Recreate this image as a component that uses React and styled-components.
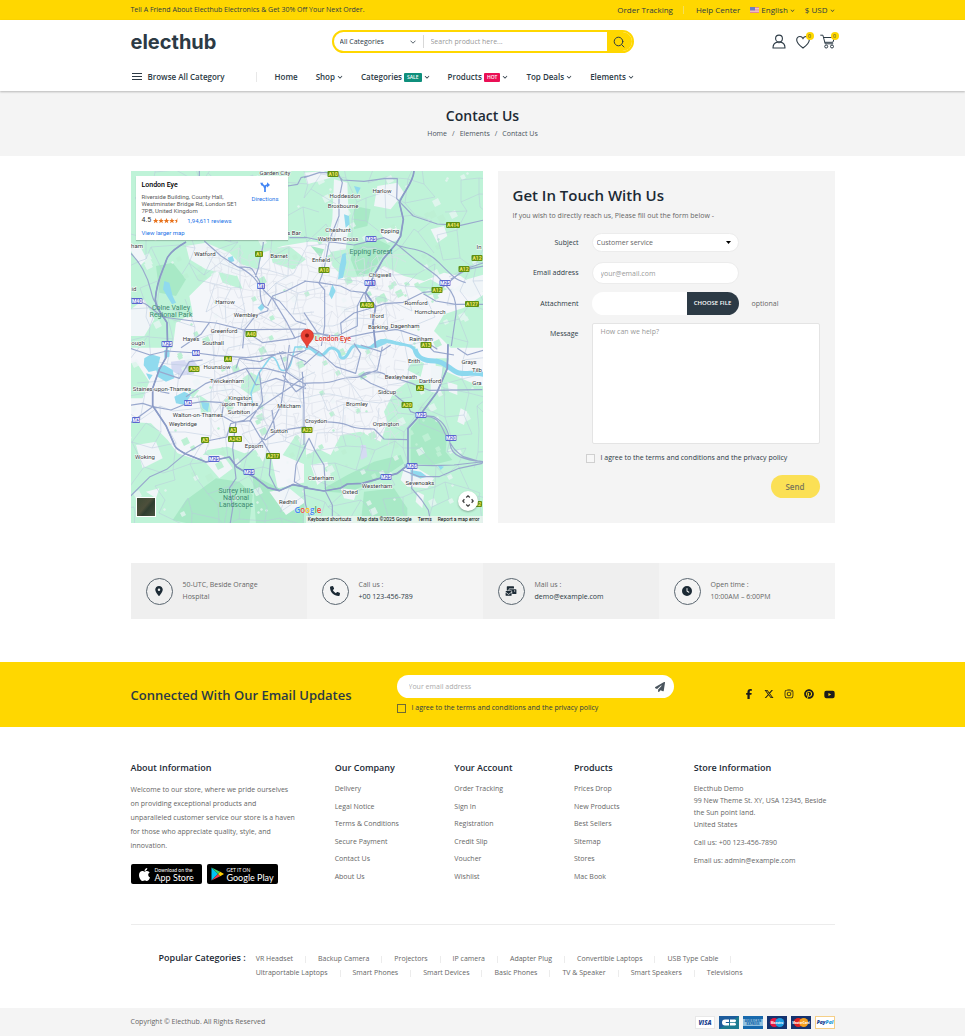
import React, { useState } from "react";
import styled, { createGlobalStyle } from "styled-components";
import {
  FaAngleDown,
  FaClock,
  FaEnvelopesBulk,
  FaFacebookF,
  FaInstagram,
  FaLocationDot,
  FaPaperPlane,
  FaPhone,
  FaPinterest,
  FaXTwitter,
  FaYoutube,
  FaApple,
} from "react-icons/fa6";

const GlobalStyle = createGlobalStyle`
  * {
    box-sizing: border-box;
  }
  body {
    margin: 0;
    background: #fff;
    color: #666;
    font-family: "Open Sans", "Noto Sans", sans-serif;
    font-size: 7px;
    line-height: 12px;
  }
  h1, h2, h3, p, ul {
    margin: 0;
    padding: 0;
  }
  ul {
    list-style: none;
  }
  a {
    color: inherit;
    text-decoration: none;
  }
  button, input, select, textarea {
    font: inherit;
    color: inherit;
  }
  svg {
    display: block;
    flex: none;
  }
`;

const Container = styled.div`
  width: 100%;
  max-width: 704px;
  margin: 0 auto;
`;

/* ---------- top bar ---------- */

const TopBar = styled.div`
  background: #ffd700;
  color: #2c3a45;
`;

const TopInner = styled(Container)`
  display: flex;
  align-items: center;
  justify-content: space-between;
  min-height: 20px;
`;

const TopLinks = styled.div`
  display: flex;
  align-items: center;
  font-size: 8px;

  > * + * {
    margin-left: 10px;
    padding-left: 12px;
    border-left: 1px solid #f5e05a;
  }
`;

const TopLink = styled.a`
  display: block;
  line-height: 8px;
`;

const TopMenu = styled.button`
  display: flex;
  align-items: center;
  gap: 2px;
  padding: 0;
  border: 0;
  background: none;
  line-height: 8px;
  cursor: pointer;
`;

/* ---------- header ---------- */

const Header = styled.header`
  position: relative;
  background: #fff;
  box-shadow: 0 1px 2px rgba(0, 0, 0, 0.25);
  color: #2c3a45;
`;

const HeaderMain = styled(Container)`
  display: grid;
  grid-template-columns: 1fr 302px 1fr;
  align-items: center;
  padding-top: 10px;
`;

const Logo = styled.a`
  font-family: Inter, sans-serif;
  font-size: 20px;
  font-weight: 700;
  line-height: 22px;
  color: #2c3a45;
`;

const Search = styled.form`
  display: flex;
  height: 23px;
  border: 2px solid #ffd700;
  border-radius: 12px;
  overflow: hidden;
`;

const CategoryPick = styled.div`
  display: flex;
  align-items: center;
  width: 89px;
  padding: 0 7px 0 6px;

  select {
    flex: 1;
    min-width: 0;
    padding: 0;
    border: 0;
    background: none;
    appearance: none;
    outline: none;
  }
`;

const SearchInput = styled.input`
  flex: 1;
  min-width: 0;
  margin: 3px 0;
  padding: 0 7px;
  border: 0;
  border-left: 1px solid #d8d8d8;
  outline: none;

  &::placeholder {
    color: #999;
  }
`;

const SearchButton = styled.button`
  display: flex;
  align-items: center;
  justify-content: center;
  width: 25px;
  padding: 0;
  border: 0;
  background: #ffd700;
  cursor: pointer;
`;

const HeaderIcons = styled.div`
  display: flex;
  justify-content: flex-end;
  gap: 10px;
`;

const IconLink = styled.a`
  position: relative;
  display: block;
`;

const Count = styled.span`
  position: absolute;
  top: -2px;
  right: -4px;
  width: 8px;
  height: 8px;
  border-radius: 50%;
  background: #ffd700;
  font-size: 5px;
  line-height: 8px;
  text-align: center;
`;

const Nav = styled(Container)`
  display: flex;
  align-items: center;
  min-height: 28px;
  margin-top: 10px;
  font-size: 8px;
  font-weight: 600;
`;

const Browse = styled.button`
  display: flex;
  align-items: center;
  gap: 6px;
  width: 126px;
  padding: 0 0 0 1px;
  border: 0;
  border-right: 1px solid #e8e8e8;
  background: none;
  line-height: 10px;
  cursor: pointer;
`;

const NavList = styled.ul`
  display: flex;
  gap: 18px;
  padding-left: 18px;
`;

const NavLink = styled.a`
  display: flex;
  align-items: center;
  gap: 2px;
`;

const Tag = styled.span`
  padding: 0 3px;
  border-radius: 1px;
  background: ${({ $color }) => $color};
  color: #fff;
  font-size: 5px;
  line-height: 9px;
`;

/* ---------- page title ---------- */

const PageTitle = styled.div`
  padding: 15px 0 14px;
  background: #f4f4f4;
  text-align: center;

  h1 {
    color: #1c2a35;
    font-size: 14px;
    font-weight: 600;
    line-height: 20px;
  }
`;

const Crumbs = styled.nav`
  display: flex;
  justify-content: center;
  gap: 5px;
  color: #4a555e;
  line-height: 16px;
`;

/* ---------- contact ---------- */

const Contact = styled(Container)`
  display: grid;
  grid-template-columns: 352fr 337fr;
  gap: 15px;
  margin-top: 15px;
`;

const MapBox = styled.section`
  position: relative;
  overflow: hidden;
  color: #333;
  font-family: Roboto, sans-serif;

  > svg {
    width: 100%;
    height: auto;
  }
`;

const PlaceCard = styled.div`
  position: absolute;
  top: 5px;
  left: 5px;
  display: flex;
  justify-content: space-between;
  width: 152px;
  padding: 5px 9px 4px 6px;
  background: #fff;
  box-shadow: 0 1px 1px rgba(0, 0, 0, 0.2);
  font-size: 6px;
  line-height: 7px;

  h3 {
    color: #000;
    font-size: 7px;
    font-weight: 500;
    line-height: 9px;
  }
  p {
    margin: 3px 0 2px;
    color: #5b5b5b;
  }
  a {
    color: #1a73e8;
  }
`;

const Rating = styled.div`
  display: flex;
  align-items: center;
  gap: 2px;
  margin-bottom: 4px;
  font-size: 7px;
  line-height: 9px;

  a {
    margin-left: 5px;
    font-size: 6px;
  }
`;

const Directions = styled.a`
  display: flex;
  flex-direction: column;
  align-items: center;
  gap: 3px;
  padding-top: 1px;
`;

const Satellite = styled.button`
  position: absolute;
  bottom: 6px;
  left: 5px;
  width: 20px;
  height: 20px;
  padding: 0;
  border: 1px solid #fff;
  background: linear-gradient(130deg, #3c4a35, #4d4f3b 45%, #2f3d30 60%, #4a5340);
`;

const MapControl = styled.button`
  position: absolute;
  right: 5px;
  bottom: 12px;
  display: flex;
  align-items: center;
  justify-content: center;
  width: 20px;
  height: 20px;
  padding: 0;
  border: 0;
  border-radius: 50%;
  background: #fff;
  box-shadow: 0 1px 2px rgba(0, 0, 0, 0.3);
`;

const GoogleMark = styled.div`
  position: absolute;
  bottom: 7px;
  left: 164px;
  font-family: "Open Sans", sans-serif;
  font-size: 8px;
  font-weight: 600;
  line-height: 12px;
  text-shadow: 0 0 1px #fff;
`;

const MapFooter = styled.div`
  position: absolute;
  right: 0;
  bottom: 0;
  display: flex;
  gap: 6px;
  padding: 0 3px 0 2px;
  background: rgba(245, 245, 245, 0.7);
  color: #000;
  font-size: 5px;
  line-height: 7px;
`;

const FormPanel = styled.form`
  padding: 15px 15px 24px;
  background: #f4f4f4;

  h2 {
    color: #1c2a35;
    font-size: 15px;
    font-weight: 600;
    line-height: 19px;
  }
  > p {
    margin: 5px 0 11px;
  }
`;

const Field = styled.div`
  display: grid;
  grid-template-columns: 66px 1fr;
  column-gap: 13px;
  align-items: ${({ $top }) => ($top ? "start" : "center")};
  margin-bottom: ${({ $gap }) => $gap || 8}px;

  > label {
    padding-top: ${({ $top }) => ($top ? 5 : 0)}px;
    color: #2c3a45;
    text-align: right;
  }
`;

const SelectWrap = styled.div`
  display: flex;
  align-items: center;
  width: 147px;
  height: 19px;
  padding: 0 7px 0 4px;
  border: 1px solid #ececec;
  border-radius: 10px;
  background: #fff;

  select {
    flex: 1;
    padding: 0;
    border: 0;
    background: none;
    appearance: none;
    outline: none;
  }
`;

const TextInput = styled.input`
  width: 147px;
  height: 22px;
  padding: 0 8px;
  border: 1px solid #ececec;
  border-radius: 11px;
  background: #fff;
  outline: none;

  &::placeholder {
    color: #999;
  }
`;

const Attach = styled.div`
  display: flex;
  align-items: center;
  gap: 13px;
`;

const FilePick = styled.div`
  display: flex;
  width: 147px;
  height: 23px;
  border-radius: 12px;
  background: #fff;
  overflow: hidden;

  input {
    width: 0;
    flex: 1;
    opacity: 0;
  }
  label {
    width: 52px;
    background: #2c3a45;
    color: #fff;
    font-size: 6px;
    font-weight: 600;
    line-height: 23px;
    text-align: center;
    cursor: pointer;
  }
`;

const Message = styled.textarea`
  display: block;
  width: 100%;
  height: 121px;
  padding: 2px 8px;
  border: 1px solid #e4e4e4;
  border-radius: 2px;
  background: #fff;
  outline: none;
  resize: none;

  &::placeholder {
    color: #999;
  }
`;

const Check = styled.label`
  display: flex;
  align-items: center;
  gap: 6px;
  color: #2c3a45;

  input {
    width: 9px;
    height: 9px;
    margin: 0;
    border: 1px solid ${({ $line }) => $line};
    background: ${({ $fill }) => $fill};
    appearance: none;
  }
  input:checked {
    background: #2c3a45;
  }
`;

const Agree = styled.div`
  padding-left: 73px;
`;

const Send = styled.button`
  display: block;
  width: 49px;
  height: 23px;
  margin: 11px 0 0 auto;
  padding: 0;
  border: 0;
  border-radius: 12px;
  background: #fbe055;
  color: #79755a;
  font-size: 8px;
  font-weight: 600;
  cursor: pointer;
`;

/* ---------- info strip ---------- */

const InfoStrip = styled(Container)`
  display: grid;
  grid-template-columns: repeat(4, 1fr);
  margin-top: 40px;
`;

const InfoCell = styled.div`
  display: flex;
  align-items: center;
  gap: 10px;
  min-height: 56px;
  padding: 0 15px;
  background: #f4f4f4;

  &:nth-child(odd) {
    background: #efefef;
  }
  p {
    max-width: 90px;
  }
  a {
    color: #2c3a45;
  }
`;

const Round = styled.span`
  display: flex;
  flex: none;
  align-items: center;
  justify-content: center;
  width: 27px;
  height: 27px;
  border: 1px solid #5a6670;
  border-radius: 50%;
  color: #1c2a35;
`;

/* ---------- newsletter ---------- */

const Newsletter = styled.section`
  margin-top: 43px;
  background: #ffd700;
`;

const NewsInner = styled(Container)`
  display: grid;
  grid-template-columns: 266px 277px 1fr;
  align-items: center;
  min-height: 65px;

  h2 {
    color: #2c3a45;
    font-size: 13px;
    font-weight: 600;
    line-height: 18px;
  }
`;

const Subscribe = styled.div`
  display: flex;
  align-items: center;
  height: 23px;
  margin-bottom: 4px;
  padding: 0 9px 0 12px;
  border-radius: 12px;
  background: #fff;

  input {
    flex: 1;
    min-width: 0;
    padding: 0;
    border: 0;
    background: none;
    outline: none;
  }
  input::placeholder {
    color: #aaa;
  }
  button {
    padding: 0;
    border: 0;
    background: none;
    color: #4a555e;
    cursor: pointer;
  }
`;

const Socials = styled.div`
  display: flex;
  justify-content: flex-end;
  gap: 10px;
  color: #1c1c1c;
`;

/* ---------- footer ---------- */

const FooterGrid = styled(Container)`
  display: grid;
  grid-template-columns: 29fr 17fr 17fr 17fr 20fr;
  padding: 34px 0 40px;

  h3 {
    margin-bottom: 9px;
    color: #1c2a35;
    font-size: 9px;
    font-weight: 600;
    line-height: 13px;
    white-space: nowrap;
  }
`;

const About = styled.p`
  line-height: 14px;
`;

const Badges = styled.div`
  display: flex;
  gap: 5px;
  margin-top: 11px;
`;

const Badge = styled.a`
  display: flex;
  align-items: center;
  gap: 3px;
  width: 71px;
  height: 20px;
  padding-left: ${({ $pad }) => $pad}px;
  border-radius: 2px;
  background: #000;
  color: #fff;
  font-family: Lato, sans-serif;
  font-size: 9px;
  line-height: 9px;

  small {
    display: block;
    font-size: 5px;
    line-height: 6px;
    white-space: nowrap;
  }
  span {
    white-space: nowrap;
  }
`;

const LinkList = styled.ul`
  display: flex;
  flex-direction: column;
  justify-content: space-between;
  min-height: 100px;
  margin-bottom: 1px;
`;

const Address = styled.div`
  p + p {
    margin-top: 6px;
  }
`;

const Popular = styled(Container)`
  display: flex;
  gap: 10px;
  padding: 26px 28px 28px;
  border-top: 1px solid #ececec;

  h3 {
    color: #1c2a35;
    font-size: 9px;
    font-weight: 600;
    line-height: 14px;
    white-space: nowrap;
  }
  ul {
    display: flex;
    flex-wrap: wrap;
    max-width: 510px;
    padding-top: 1px;
  }
  li {
    display: flex;
    align-items: center;
    line-height: 14px;
  }
  li:not(:last-child)::after {
    content: "";
    height: 7px;
    margin: 0 12px;
    border-left: 1px solid #ececec;
  }
`;

const Copyright = styled.footer`
  background: #f4f4f4;
`;

const CopyInner = styled(Container)`
  display: flex;
  align-items: center;
  justify-content: space-between;
  min-height: 28px;
`;

const Payments = styled.div`
  display: flex;
  gap: 4px;
`;

/* ---------- icons ---------- */

const UsFlag = () => (
  <svg width="9" height="6" viewBox="0 0 9 6">
    <rect width="9" height="6" fill="#f3dfe3" />
    <path d="M0 .5h9M0 2.2h9M0 3.9h9M0 5.5h9" stroke="#e0707c" strokeWidth=".8" />
    <rect width="5" height="3.4" fill="#6a7cc4" />
  </svg>
);

const SearchIcon = () => (
  <svg width="12" height="12" viewBox="0 0 12 12" fill="none" stroke="#2c3a45" strokeLinecap="round">
    <circle cx="5.5" cy="5.5" r="4.3" />
    <path d="M8.7 8.7 11 11" />
  </svg>
);

const UserIcon = () => (
  <svg width="14" height="15" viewBox="0 0 14 15" fill="none" stroke="#2c3a45" strokeWidth="1.1" strokeLinejoin="round">
    <circle cx="7" cy="4.500" r="3.400" />
    <path d="M1 14c0-3 1.600-5.200 4-5.900.6.4 1.300.6 2 .6s1.400-.2 2-.6c2.400.7 4 2.900 4 5.900z" />
  </svg>
);

const HeartIcon = () => (
  <svg width="14" height="15" viewBox="0 0 14 15" fill="none" stroke="#2c3a45" strokeWidth="1.1">
    <path d="M7 14C3.400 11.300.7 8.900.7 6 .7 3.900 2.200 2.500 4 2.500c1.300 0 2.400.7 3 1.900.6-1.200 1.700-1.900 3-1.900 1.800 0 3.300 1.400 3.300 3.500 0 2.900-2.700 5.300-6.300 8z" />
  </svg>
);

const CartIcon = () => (
  <svg width="15" height="15" viewBox="0 0 15 15" fill="none" stroke="#2c3a45">
    <path d="M.3 1.200h2.600l2.300 8.600h8M3.700 3.500h10.800l-1.600 4.800H4.800" />
    <circle cx="6.200" cy="12.500" r="1.500" />
    <circle cx="12" cy="12.500" r="1.500" />
  </svg>
);

const MenuIcon = () => (
  <svg width="10" height="8" viewBox="0 0 10 8" stroke="#2c3a45">
    <path d="M0 .5h10M0 3.500h10M0 6.500h10" />
  </svg>
);

const ChevronIcon = () => (
  <svg width="6" height="4" viewBox="0 0 6 4" fill="none" stroke="#2c3a45" strokeWidth=".8">
    <path d="M.5.7 3 3.200 5.500.7" />
  </svg>
);

const CaretIcon = () => (
  <svg width="5" height="3" viewBox="0 0 5 3">
    <path d="M0 0h5L2.500 3z" fill="#000" />
  </svg>
);

const StarsIcon = () => (
  <svg width="27" height="6" viewBox="0 0 27 6" fill="#e7711b">
    {[0, 1, 2, 3].map((i) => (
      <path key={i} transform={`translate(${i * 5.4} 0)`} d="M2.700 0l.8 1.900h1.900L3.900 3.200l.6 2.100-1.800-1.300L.9 5.300l.6-2.100L0 1.900h1.900z" />
    ))}
    <path d="M24.300 0v4l-1.800 1.300.6-2.100L21.600 1.900h1.900z" />
  </svg>
);

const DirectionsIcon = () => (
  <svg width="10" height="10" viewBox="0 0 10 10" fill="none" stroke="#4285f4" strokeWidth="1.700">
    <path d="M5 10V6.300C5 4 6 3 8 3M5 6.500C4.800 4.500 3.500 3.200 1.700 2.300" />
    <path d="M7 .2 10 3 7 5.600z" fill="#4285f4" stroke="none" />
    <path d="M.2.700h3L1.500 3.700z" fill="#4285f4" stroke="none" />
  </svg>
);

const PanIcon = () => (
  <svg width="12" height="12" viewBox="0 0 12 12" fill="none" stroke="#444" strokeWidth="1.300">
    <path d="M4.200 2.400 6 .8l1.800 1.600M4.200 9.600 6 11.200l1.800-1.600M2.400 4.200.8 6l1.600 1.800M9.600 4.200 11.200 6 9.600 7.800" />
  </svg>
);

const PlayIcon = () => (
  <svg width="13" height="14" viewBox="0 0 13 14">
    <path d="M.5.500v13L7 7z" fill="#00c3f5" />
    <path d="M.5.500 7 7l2.200-2.300z" fill="#3bd06b" />
    <path d="M.5 13.500 7 7l2.200 2.300z" fill="#f0384b" />
    <path d="M9.200 4.700 13 7 9.200 9.300 7 7z" fill="#ffcf00" />
  </svg>
);

const Visa = () => (
  <svg width="20" height="13" viewBox="0 0 20 13">
    <rect x=".5" y=".5" width="19" height="12" fill="#fff" stroke="#e8e8e8" />
    <text x="10" y="9" textAnchor="middle" fontFamily="Open Sans" fontSize="6" fontWeight="800" fontStyle="italic" fill="#1a3f8f">
      VISA
    </text>
  </svg>
);

const CarteBleue = () => (
  <svg width="20" height="13" viewBox="0 0 20 13">
    <rect width="20" height="13" fill="#1c5c9c" />
    <path d="M0 13 20 0v13z" fill="#1b7a90" />
    <path d="M10 3.500H6a3 3 0 0 0 0 6h4V7H6.800v-.9H10zM11 3.500h5a1.400 1.400 0 0 1 0 2.700h-5zM11 6.900h5a1.400 1.400 0 0 1 0 2.700h-5z" fill="#fff" />
  </svg>
);

const Amex = () => (
  <svg width="20" height="13" viewBox="0 0 20 13">
    <rect width="20" height="13" fill="#1769ad" />
    <rect y="3" width="20" height="7" fill="#8fc0e0" />
    <text x="10" y="6" textAnchor="middle" fontFamily="Open Sans" fontSize="3" fontWeight="800" fill="#1769ad">
      AMERICAN
    </text>
    <text x="10" y="9" textAnchor="middle" fontFamily="Open Sans" fontSize="3" fontWeight="800" fill="#1769ad">
      EXPRESS
    </text>
  </svg>
);

const Circles = ({ left, right, name }) => (
  <svg width="20" height="13" viewBox="0 0 20 13">
    <rect width="20" height="13" fill="#14326e" />
    <circle cx="7.300" cy="6.500" r="4.500" fill={left} />
    <circle cx="12.700" cy="6.500" r="4.500" fill={right} />
    <text x="10" y="7.500" textAnchor="middle" fontFamily="Open Sans" fontSize="3" fontWeight="700" fill="#fff">
      {name}
    </text>
  </svg>
);

const PayPal = () => (
  <svg width="20" height="13" viewBox="0 0 20 13">
    <rect x=".5" y=".5" width="19" height="12" fill="#fff" stroke="#f5cf87" />
    <text x="10" y="8" textAnchor="middle" fontFamily="Open Sans" fontSize="5" fontWeight="800" fontStyle="italic" fill="#1a3f8f">
      Pay<tspan fill="#2a9ad8">Pal</tspan>
    </text>
  </svg>
);

/* ---------- map drawing ---------- */

// the map is drawn as four quarters, each on a grid three times finer than the page
const QUARTERS = [
  {
    at: "translate(-5 -5)",
    green: [
      "M0 0H560V225L470 240 410 260 395 310 330 290 280 310 230 350 190 390 200 440 150 470 140 545H0z",
      "M270 300l60 20 20 50-60-20zM430 250l60-10 50 40-40 30-60-20z",
    ],
    bare: ["M15 430l40-30 30 60-30 50H15zM180 240l60-10 70 30 50 50-30 20-90-20-50-30zM12 250l30-10 20 40-20 20z"],
    forest: ["M90 300l50-10 40 50-30 50-50-10z"],
    water: ["M115 345l15 5 10 40 10 20-12 5-15-25-12-20zM395 425l15-15 5 15-10 10zM305 275l15-5 5 15-15 5z"],
    roads: [
      "M180 228C150 245 125 265 120 285S92 340 88 400c0 25 18 42 35 70l2 75",
      "M12 260C40 285 65 330 75 375S90 400 92 420l20 34",
      "M12 395l48 20 50 38 90 12 70 6 80 20 190-2",
      "M235 225l50 45 50 32c20 8 35 20 48 32l30 38 28 28 42 70 25 48",
      "M340 303c18 2 35-4 42 12l18 30c5 20-2 55 12 72 6 10 20 6 12 18l-34 12-35 45-5 55",
      "M412 228c0 20-12 50-14 75l-10 30",
      "M540 345l-60 30-40 15-15 30",
      "M350 490l60 40 90-12 40-14",
      "M250 470l-25 35-60 40",
      "M490 215h50M485 60l30-5 10-20 20-5M220 15v15",
      "M440 395l20 10 50 60 30 10",
    ],
  },
  {
    at: "translate(173 -5)",
    green: [
      "M0 0H540V380L470 330 420 320 360 345 300 330 240 300 200 330 120 335 85 300 75 230 0 225z",
      "M440 545l-50-50 30-50 60-20 60-40v160zM330 360l50-20 50 30-60 20z",
    ],
    bare: [
      "M90 40l40 10 5 130-10 70-60 10 20-100zM220 60l60-10 20 30-40 50-50-10zM225 195l50-15 15 40-40 10zM450 370l40-30 50-15v50l-40 20z",
      "M0 20l60-5 20 20-70 20zM380 190l40-10 10 30-30 20z",
    ],
    forest: ["M150 235l70-15 40 20-60 80-40 10-20-50zM150 120l50 10-10 50-40 10zM20 240l40 10-10 25z"],
    water: [
      "M115 265l10-5 2 30-10 45-15 5 5-40zM85 355l10 20-12 25-8-15zM120 145l15 5 2 25-12 10zM150 60l20 5-10 20z",
      "M200 545l30-25 40 5 40 14h-20l-40-8-30 14z",
    ],
    roads: [
      "M330 15c-2 35-30 60-44 95l12 50-8 50-15 25-38 45-28 50-24 50 30 42-8 48 8 75",
      "M100 15l15 35-10 50v50l-28 70-17 90-15 42 17 20v108l-10 60",
      "M0 35l45-15 50 0 20 22 65 4 60-8 40 0-2 60 50 52 72 24 70 4 70-16",
      "M540 290l-60 20-52 45-28 20-42 4-60 30-56 4-50 16-42 12-40 30 5 60",
      "M540 415h-85l-60-10-37-22",
      "M0 345l45 5 65 10 30 15 42 5 8 38",
      "M0 213l60 12 90 12 90-22 35 17 65 54 60 45 30 32c20 20 28 45 26 80l-14 97",
      "M275 235c40 20 80 5 130 55s50 50 80 60M440 340l50-30 50-10",
      "M200 500l80-10 60 20 60 40M180 380l-20 40 0 60-60 30-90-10",
      "M0 440l40 60 60 20 100-20",
    ],
  },
  {
    at: "translate(-5 174)",
    green: [
      "M0 230l75 5 50 50 30 40 60 20 30-30 60-10 50 20 50-15 30 20 20 100 90-20V545H0z",
      "M0 60l30-10 40 60-20 50H0zM350 100l25-18 32 18-5 35-30 15-28-20zM220 150l30 20 5 30-30 5zM180 130l40 5-20 25zM470 330l40-60 30 20v70z",
    ],
    bare: ["M30 300l60-10 20 50-60 30zM220 330l70 0 30 40-40 30zM430 440l60-10 50 40-60 40zM60 440l40-10-10 30zM380 300l50 10-20 40z"],
    forest: ["M270 400l70 10 40 40-10 90-140 5-90-20 40-60zM380 390l160 80v70H390z"],
    water: [
      "M55 40l20-12 28 8-10 40-25 5-15-20zM90 70l25-10 25 15 5 25-25 10-25-15zM115 15l15 0v20l-15 5zM145 155l30-15 20 10-20 30-25-5zM225 170l25 5-5 25-15-10zM60 85l20 5-10 15z",
    ],
    airport: "M135 50l65-8 15 20-12 25-40 5-26-15z",
    roads: [
      "M123-2l-3 40-20 35-20 57v52l40 60 22 50c5 20 20 25 38 35l60 24 70-15 22 30 58 34 35 28 35 9 40-18 45 8",
      "M12 235l68-50 55 10 38-16 60-10 60 4",
      "M12 455l60-60 50-22 60-50 60-35 60-12 12-40 40-10 50-40 90-60 40-30",
      "M12 10l60 20 50-12 90 6 60 8 90 6 170-20",
      "M100 80l60 20 30-50 40-5",
      "M180 155l60-40 80-30 40-15 60 0 60 15 20-50 40-20",
      "M293 172l-5 40 35 20 50-5 30 50 15 8 30-20-10-70",
      "M330 230l-10 80 10 90-20 30 10 60-8 50",
      "M325 365l40-35 50-50 50-100 15-100-20-60",
      "M405 280l30 50-5 60 20 40 10 8M440 260l100-15",
      "M360 70l30 50 60-20 90 30M400 80l10 90-20 30-20 30",
      "M330 70l10-30 60 10 70-30 70 30M470 90l40 50 30-20",
      "M490 0l-10 80 60 40M540 300l-30 60-5 50 35 20",
      "M80 185l-30-10-38 6M80 135l50 10",
    ],
  },
  {
    at: "translate(173 174)",
    green: [
      "M230 290l20-60-10-30 30-60 55-40 50 10 30-40 90 40 60 20v420H0V340l40-30 40 20 30-60 60-10z",
      "M330 40l30 15-10 40-40-20zM395 40l40 0-10 40-30 10z",
    ],
    bare: ["M300 370l40 0 50 30-20 30-60-5-20-20zM20 360l50-10 10 40-40 30zM110 430l50 5-10 30-30-5zM380 60l35 5-5 80-30-5zM470 190l20 10-10 40-20-10zM340 440l20 10-5 40-20-20zM430 110l30 10 0 30-25-10z"],
    forest: ["M320 250l30-35 45 5 35 40-5 60 20 25-60 15-65-5zM60 430l70-40 80-40 80-20 10 25-60 40-110 50-60-5zM180 440l90-10 40 60 0 50H170z"],
    water: ["M320 375l30 5 20 15-20 5-30-10zM400 360l20 5-10 10z"],
    airport: "M170 300l15 0 5 35-20 10z",
    roads: [
      "M0 428l60 10 50-9 20-12 45-2 105-30 32-25V250l38-42 50-68 30-70 2-72",
      "M0 115c40-5 60 5 100-10s60 0 75-15 60-10 70 0 60 15 90 30l40 16 160-2",
      "M170 95l30 20 60 25 50 40 10 20 30 10 40 5c30 15 45 40 48 80s45 50 100 55",
      "M350 215c60-5 60 30 78 60s20 40 50 60l60 18",
      "M300 360l90 2 60-2 90-10M295 375l50 20 60 0 60-25 70-15",
      "M0 225c30 10 100 0 130 15s50 10 80 12l30 30 70 2",
      "M0 310l15-30 20 40 25 40 5 80 20 40 0 50",
      "M325 370l-2 60 30 35 20 30 10 50",
      "M0 60l45-40 50 45 60 20 15-60-20-30M45 20L10 0",
      "M0 430l5 50 20 60M170 0l60 20 30-20M170 95l50-20 15-70",
      "M460 10l30 20 50-15M370 0l20 20 60 10",
      "M0 300V180l-5-100",
    ],
  },
];

const PLACES = [
  ["Garden City", 144, 4], ["Harlow", 251, 22], ["Hoddesdon", 214, 27], ["Broxbourne", 212, 37],
  ["Cheshunt", 207, 61], ["Epping", 259, 62], ["Waltham Cross", 207, 70], ["Enfield", 190, 91],
  ["Chigwell", 249, 106], ["Romford", 285, 134], ["Hornchurch", 299, 143], ["Ilford", 246, 147],
  ["Barking", 247, 158], ["Dagenham", 274, 157], ["Rainham", 290, 170], ["In", 348, 78],
  ["Watford", 74, 85], ["Barnet", 148, 87], ["s Bar", 163, 64], ["ham", 6, 77], ["id", 3, 120],
  ["Harrow", 94, 133], ["Wembley", 115, 146], ["Greenford", 93, 162], ["Hayes", 60, 170],
  ["Southall", 82, 174], ["ough", 7, 174], ["Hounslow", 86, 198], ["Twickenham", 96, 212],
  ["Staines-upon-Thames", 31, 220], ["Kingston", 109, 229], ["upon Thames", 109, 235],
  ["Surbiton", 108, 243], ["Walton-on-Thames", 67, 246], ["Weybridge", 52, 255],
  ["Mitcham", 158, 237], ["Sutton", 148, 262], ["Epsom", 123, 277], ["Woking", 14, 288],
  ["Redhill", 157, 333], ["Erith", 283, 192], ["Grays", 338, 193], ["Tilb", 346, 201],
  ["Gra", 346, 214], ["Bexleyheath", 270, 208], ["Dartford", 299, 212], ["Sidcup", 256, 223],
  ["Bromley", 226, 235], ["Croydon", 185, 252], ["Orpington", 255, 255], ["Caterham", 190, 309],
  ["Oxted", 219, 323], ["Westerham", 246, 317], ["Sevenoaks", 289, 314],
];

const PARKS = [
  ["Colne Valley", 40, 139], ["Regional Park", 40, 146], ["Epping Forest", 240, 83],
  ["Surrey Hills", 105, 322], ["National", 105, 329], ["Landscape", 105, 336],
];

const SHIELDS = [
  ["A1", 128, 83], ["A40", 120, 163], ["A10", 202, 3], ["A414", 322, 54],
  ["A10", 193, 99], ["A12", 333, 98], ["A12", 346, 87], ["A12", 306, 119], ["A406", 236, 134],
  ["A127", 341, 133], ["A13", 295, 174], ["A4", 97, 188], ["A30", 63, 198], ["A3", 102, 259],
  ["A243", 104, 268], ["A3", 74, 269], ["A217", 142, 285], ["A2", 289, 217], ["A20", 276, 234],
  ["A23", 176, 259], ["A2", 347, 333], ["M1", 130, 115], ["M40", 6, 130], ["M25", 36, 173],
  ["M25", 240, 68], ["M11", 239, 112], ["M25", 314, 112], ["M4", 65, 182], ["M3", 57, 232],
  ["M3", 5, 249], ["M25", 83, 288], ["M25", 118, 301], ["M25", 290, 244], ["M20", 320, 267],
  ["M26", 281, 295], ["M25", 255, 306],
];

// small repeatable generator for the side streets
const makeRandom = (seed) => () => {
  seed = (seed * 16807) % 2147483647;
  return seed / 2147483647;
};

const makeStreets = (step, from, to, chance) => {
  const random = makeRandom(step * 77);
  const count = Math.ceil((to - from) / step) + 1;
  const nodes = [];
  for (let row = 0; row < count; row++) {
    nodes.push([]);
    for (let col = 0; col < count; col++) {
      nodes[row].push([
        Math.round(from + col * step + (random() - 0.5) * step),
        Math.round(from + row * step + (random() - 0.5) * step),
      ]);
    }
  }
  let d = "";
  for (let row = 0; row < count - 1; row++) {
    for (let col = 0; col < count - 1; col++) {
      const here = nodes[row][col];
      if (random() < chance) d += `M${here}L${nodes[row][col + 1]}`;
      if (random() < chance) d += `M${here}L${nodes[row + 1][col]}`;
    }
  }
  return d;
};

const makePatches = (seed, count, from, to, size) => {
  const random = makeRandom(seed);
  let d = "";
  for (let i = 0; i < count; i++) {
    const x = Math.round(from + random() * (to - from));
    const y = Math.round(from + random() * (to - from));
    const r = 1 + Math.round(random() * size);
    d += `M${x} ${y}l${r * 2} ${-r} ${r} ${r * 2} ${-r * 2} ${r}z`;
  }
  return d;
};

const COUNTRY_LANES = makeStreets(18, -10, 370, 0.6);
const CITY_STREETS = makeStreets(8, 80, 265, 0.75);
const PARK_PATCHES = makePatches(41, 130, 40, 310, 2);
const VILLAGES = makePatches(97, 150, -5, 350, 2);

const LondonMap = () => (
  <svg viewBox="0 0 352 352" role="img" aria-label="Map of London">
    <rect width="352" height="352" fill="#f4f6fa" />
    {QUARTERS.map((q) => (
      <g key={q.at} transform={`${q.at} scale(.33333)`}>
        <path d={q.green.join("")} fill="#bff3d8" />
        <path d={q.forest.join("")} fill="#a8e9c6" />
        <path d={q.bare.join("")} fill="#f0f5f8" />
        {q.airport && <path d={q.airport} fill="#d5daf2" />}
      </g>
    ))}
    <path d={PARK_PATCHES} fill="#bdf0d4" />
    <path d={VILLAGES} fill="#edf5f6" opacity=".7" />
    <path d={COUNTRY_LANES} fill="none" stroke="#b9c9dc" strokeWidth=".5" />
    <path d={CITY_STREETS} fill="none" stroke="#dadfea" strokeWidth=".6" />
    <g fill="none" stroke="#8cd8ee" strokeLinejoin="round">
      <path d="M122 236l-2-14 8-20 10-14c4-6 8 2 10 8s10 4 12-4l4-16 10 0" strokeWidth="1.500" />
      <path d="M174 178c8-4 10 6 16 6s6-10 14-6 2 9 8 9 6-14 14-12 12 4 18-2 14-3 22-1 16 2 18 8" strokeWidth="3" />
      <path d="M284 178c2 10 10 12 20 12s16 10 24 12 18-2 26 2" strokeWidth="5" />
    </g>
    {QUARTERS.map((q) => (
      <g key={q.at} transform={`${q.at} scale(.33333)`}>
        <path d={q.water.join("")} fill="#90daee" />
        <path d={q.roads.join("")} fill="none" stroke="#99a8cd" strokeWidth="3.500" strokeLinejoin="round" />
        <path d={q.roads[0]} fill="none" stroke="#8b9bc7" strokeWidth="5" strokeLinejoin="round" />
      </g>
    ))}
    {SHIELDS.map(([name, x, y], i) => {
      const width = name.length * 3 + 2;
      return (
        <g key={i}>
          <rect x={x - width / 2} y={y - 3} width={width} height="6" rx="1" fill={name[0] === "M" ? "#5b66cf" : "#5f8f13"} />
          <text x={x} y={y + 2} textAnchor="middle" fontSize="5" fontWeight="700" fill={name[0] === "M" ? "#fff" : "#f4e96a"}>
            {name}
          </text>
        </g>
      );
    })}
    <g textAnchor="middle" fontSize="6" stroke="#fff" strokeWidth="1" paintOrder="stroke" fill="#33373c">
      {PLACES.map(([name, x, y]) => (
        <text key={name} x={x} y={y}>{name}</text>
      ))}
    </g>
    <g textAnchor="middle" fontSize="7" fill="#3d8a70">
      {PARKS.map(([name, x, y]) => (
        <text key={name} x={x} y={y}>{name}</text>
      ))}
    </g>
    <path d="M176 177c-.8-5-6-7-6-12.500a6 6 0 0 1 12.500 0c0 5.500-5.700 7.500-6.500 12.500z" fill="#ea4335" stroke="#c5221f" strokeWidth=".5" />
    <circle cx="176" cy="164.500" r="2" fill="#8c1a13" />
    <text x="202" y="170" textAnchor="middle" fontSize="7" fontWeight="500" fill="#d93025" stroke="#fff" strokeWidth="1" paintOrder="stroke">
      London Eye
    </text>
  </svg>
);

/* ---------- content ---------- */

const NAV = [
  { label: "Home" },
  { label: "Shop", menu: true },
  { label: "Categories", menu: true, tag: "SALE", color: "#0f8f7c" },
  { label: "Products", menu: true, tag: "HOT", color: "#ea0f55" },
  { label: "Top Deals", menu: true },
  { label: "Elements", menu: true },
];

const COLUMNS = [
  {
    title: "Our Company",
    links: ["Delivery", "Legal Notice", "Terms & Conditions", "Secure Payment", "Contact Us", "About Us"],
  },
  {
    title: "Your Account",
    links: ["Order Tracking", "Sign In", "Registration", "Credit Slip", "Voucher", "Wishlist"],
  },
  {
    title: "Products",
    links: ["Prices Drop", "New Products", "Best Sellers", "Sitemap", "Stores", "Mac Book"],
  },
];

const POPULAR = [
  "VR Headset", "Backup Camera", "Projectors", "IP camera", "Adapter Plug", "Convertible Laptops",
  "USB Type Cable", "Ultraportable Laptops", "Smart Phones", "Smart Devices", "Basic Phones",
  "TV & Speaker", "Smart Speakers", "Televisions",
];

const GOOGLE = [
  ["G", "#4285f4"], ["o", "#ea4335"], ["o", "#fbbc05"], ["g", "#4285f4"], ["l", "#34a853"], ["e", "#ea4335"],
];

const Letter = styled.span`
  color: ${({ $color }) => $color};
`;

const SiteHeader = () => (
  <>
    <TopBar>
      <TopInner>
        <span>Tell A Friend About Electhub Electronics &amp; Get 30% Off Your Next Order.</span>
        <TopLinks>
          <TopLink href="#tracking">Order Tracking</TopLink>
          <TopLink href="#help">Help Center</TopLink>
          <TopMenu type="button"><UsFlag /> English <FaAngleDown size={5} /></TopMenu>
          <TopMenu type="button">$ USD <FaAngleDown size={5} /></TopMenu>
        </TopLinks>
      </TopInner>
    </TopBar>
    <Header>
      <HeaderMain>
        <Logo href="#home">electhub</Logo>
        <Search onSubmit={(e) => e.preventDefault()}>
          <CategoryPick>
            <select aria-label="Category"><option>All Categories</option></select>
            <ChevronIcon />
          </CategoryPick>
          <SearchInput aria-label="Search" placeholder="Search product here..." />
          <SearchButton aria-label="Search"><SearchIcon /></SearchButton>
        </Search>
        <HeaderIcons>
          <IconLink href="#account" aria-label="Account"><UserIcon /></IconLink>
          <IconLink href="#wishlist" aria-label="Wishlist"><HeartIcon /><Count>0</Count></IconLink>
          <IconLink href="#cart" aria-label="Cart"><CartIcon /><Count>0</Count></IconLink>
        </HeaderIcons>
      </HeaderMain>
      <Nav as="nav">
        <Browse type="button"><MenuIcon /> Browse All Category</Browse>
        <NavList>
          {NAV.map((item) => (
            <li key={item.label}>
              <NavLink href="#nav">
                {item.label}
                {item.tag && <Tag $color={item.color}>{item.tag}</Tag>}
                {item.menu && <FaAngleDown size={6} />}
              </NavLink>
            </li>
          ))}
        </NavList>
      </Nav>
    </Header>
  </>
);

const MapSection = () => (
  <MapBox>
    <LondonMap />
    <PlaceCard>
      <div>
        <h3>London Eye</h3>
        <p>Riverside Building, County Hall,<br />Westminster Bridge Rd, London SE1<br />7PB, United Kingdom</p>
        <Rating>4.5 <StarsIcon /> <a href="#reviews">1,94,611 reviews</a></Rating>
        <a href="#map">View larger map</a>
      </div>
      <Directions href="#directions"><DirectionsIcon /> Directions</Directions>
    </PlaceCard>
    <Satellite aria-label="Satellite view" />
    <MapControl aria-label="Map camera controls"><PanIcon /></MapControl>
    <GoogleMark>
      {GOOGLE.map(([letter, color], i) => (
        <Letter key={i} $color={color}>{letter}</Letter>
      ))}
    </GoogleMark>
    <MapFooter>
      <span>Keyboard shortcuts</span>
      <span>Map data ©2025 Google</span>
      <a href="#terms">Terms</a>
      <a href="#report">Report a map error</a>
    </MapFooter>
  </MapBox>
);

const ContactForm = () => {
  const [agreed, setAgreed] = useState(false);

  return (
    <FormPanel onSubmit={(e) => e.preventDefault()}>
      <h2>Get In Touch With Us</h2>
      <p>If you wish to directly reach us, Please fill out the form below -</p>
      <Field $gap={10}>
        <label htmlFor="subject">Subject</label>
        <SelectWrap>
          <select id="subject"><option>Customer service</option><option>Webmaster</option></select>
          <CaretIcon />
        </SelectWrap>
      </Field>
      <Field>
        <label htmlFor="email">Email address</label>
        <TextInput id="email" type="email" placeholder="your@email.com" />
      </Field>
      <Field>
        <label htmlFor="file">Attachment</label>
        <Attach>
          <FilePick>
            <input id="file" type="file" />
            <label htmlFor="file">CHOOSE FILE</label>
          </FilePick>
          <span>optional</span>
        </Attach>
      </Field>
      <Field $top>
        <label htmlFor="message">Message</label>
        <Message id="message" placeholder="How can we help?" />
      </Field>
      <Agree>
        <Check $line="#d0d0d0" $fill="#f7f7f7">
          <input type="checkbox" checked={agreed} onChange={() => setAgreed(!agreed)} />
          I agree to the terms and conditions and the privacy policy
        </Check>
      </Agree>
      <Send type="submit">Send</Send>
    </FormPanel>
  );
};

const Info = () => (
  <InfoStrip>
    <InfoCell>
      <Round><FaLocationDot size={10} /></Round>
      <p>50-UTC, Beside Orange Hospital</p>
    </InfoCell>
    <InfoCell>
      <Round><FaPhone size={10} /></Round>
      <p>Call us :<br /><a href="tel:+00123456789">+00 123-456-789</a></p>
    </InfoCell>
    <InfoCell>
      <Round><FaEnvelopesBulk size={12} /></Round>
      <p>Mail us :<br /><a href="mailto:demo@example.com">demo@example.com</a></p>
    </InfoCell>
    <InfoCell>
      <Round><FaClock size={10} /></Round>
      <p>Open time :<br />10:00AM – 6:00PM</p>
    </InfoCell>
  </InfoStrip>
);

const NewsletterBar = () => (
  <Newsletter>
    <NewsInner>
      <h2>Connected With Our Email Updates</h2>
      <form onSubmit={(e) => e.preventDefault()}>
        <Subscribe>
          <input type="email" aria-label="Your email address" placeholder="Your email address" />
          <button aria-label="Subscribe"><FaPaperPlane size={10} /></button>
        </Subscribe>
        <Check $line="#6f6a35" $fill="transparent">
          <input type="checkbox" />
          I agree to the terms and conditions and the privacy policy
        </Check>
      </form>
      <Socials>
        <a href="#facebook" aria-label="Facebook"><FaFacebookF size={10} /></a>
        <a href="#x" aria-label="X"><FaXTwitter size={10} /></a>
        <a href="#instagram" aria-label="Instagram"><FaInstagram size={10} /></a>
        <a href="#pinterest" aria-label="Pinterest"><FaPinterest size={10} /></a>
        <a href="#youtube" aria-label="YouTube"><FaYoutube size={11} /></a>
      </Socials>
    </NewsInner>
  </Newsletter>
);

const SiteFooter = () => (
  <>
    <FooterGrid>
      <div>
        <h3>About Information</h3>
        <About>
          Welcome to our store, where we pride ourselves<br />
          on providing exceptional products and<br />
          unparalleled customer service our store is a haven<br />
          for those who appreciate quality, style, and<br />
          innovation.
        </About>
        <Badges>
          <Badge href="#ios" $pad={6}>
            <FaApple size={15} />
            <span><small>Download on the</small>App Store</span>
          </Badge>
          <Badge href="#android" $pad={4}>
            <PlayIcon />
            <span><small>GET IT ON</small>Google Play</span>
          </Badge>
        </Badges>
      </div>
      {COLUMNS.map((column) => (
        <div key={column.title}>
          <h3>{column.title}</h3>
          <LinkList>
            {column.links.map((link) => (
              <li key={link}><a href="#link">{link}</a></li>
            ))}
          </LinkList>
        </div>
      ))}
      <Address>
        <h3>Store Information</h3>
        <p>Electhub Demo<br />99 New Theme St. XY, USA 12345, Beside the Sun point land.<br />United States</p>
        <p>Call us: +00 123-456-7890</p>
        <p>Email us: admin@example.com</p>
      </Address>
    </FooterGrid>
    <Popular>
      <h3>Popular Categories :</h3>
      <ul>
        {POPULAR.map((name) => (
          <li key={name}><a href="#category">{name}</a></li>
        ))}
      </ul>
    </Popular>
    <Copyright>
      <CopyInner>
        <span>Copyright © Electhub. All Rights Reserved</span>
        <Payments>
          <Visa />
          <CarteBleue />
          <Amex />
          <Circles left="#e5173f" right="#1c9be0" name="Maestro" />
          <Circles left="#e02020" right="#f7a01d" name="MasterCard" />
          <PayPal />
        </Payments>
      </CopyInner>
    </Copyright>
  </>
);

const App = () => (
  <>
    <GlobalStyle />
    <SiteHeader />
    <PageTitle>
      <h1>Contact Us</h1>
      <Crumbs>
        <a href="#home">Home</a>
        <span>/</span>
        <a href="#elements">Elements</a>
        <span>/</span>
        <span>Contact Us</span>
      </Crumbs>
    </PageTitle>
    <Contact>
      <MapSection />
      <ContactForm />
    </Contact>
    <Info />
    <NewsletterBar />
    <SiteFooter />
  </>
);

export default App;
